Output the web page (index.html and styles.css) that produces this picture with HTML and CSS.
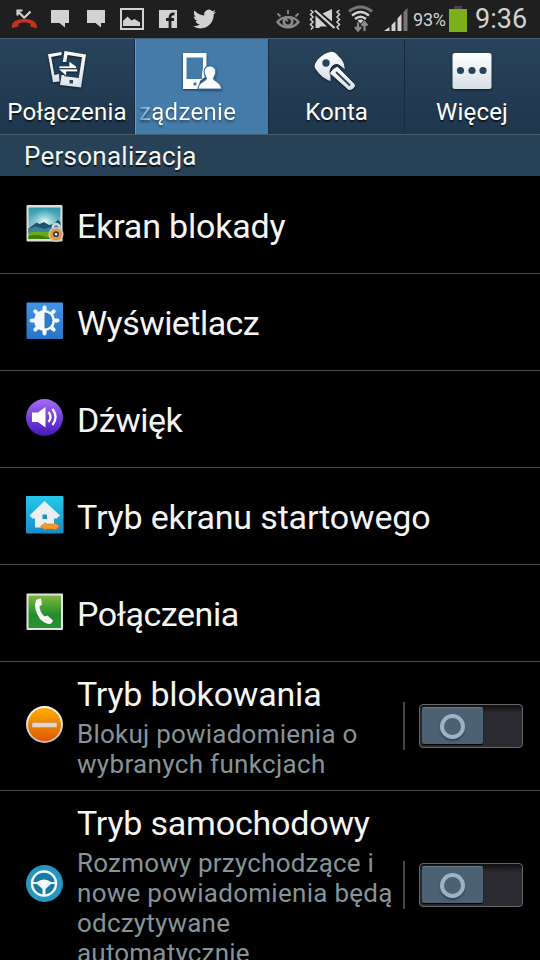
FILE: index.html
```html
<!DOCTYPE html>
<html lang="pl">
<head>
<meta charset="utf-8">
<title>Ustawienia</title>
<link rel="stylesheet" href="styles.css">
</head>
<body>
<svg class="defs" width="0" height="0">
  <defs>
    <linearGradient id="silver" x2="0" y2="1"><stop stop-color="#fff"/><stop offset="1" stop-color="#d5dfe6"/></linearGradient>
    <linearGradient id="sky" x2="0" y2="1"><stop stop-color="#2d98aa"/><stop offset="1" stop-color="#b9e3e2"/></linearGradient>
    <radialGradient id="sun" cx=".5" cy=".48" r=".45"><stop stop-color="#f4fffb"/><stop offset="1" stop-color="#9fdde0" stop-opacity="0"/></radialGradient>
    <linearGradient id="blue" x2="0" y2="1"><stop stop-color="#4295e6"/><stop offset="1" stop-color="#2774cb"/></linearGradient>
    <linearGradient id="violet" x2="0" y2="1"><stop stop-color="#a56cf2"/><stop offset=".5" stop-color="#7440dc"/><stop offset="1" stop-color="#4519b4"/></linearGradient>
    <linearGradient id="cyan" x2="0" y2="1"><stop stop-color="#24c8ea"/><stop offset="1" stop-color="#178ccb"/></linearGradient>
    <linearGradient id="green" x2="0" y2="1"><stop stop-color="#7db93d"/><stop offset=".6" stop-color="#238c2b"/><stop offset="1" stop-color="#2c9136"/></linearGradient>
    <linearGradient id="orange" x2="0" y2="1"><stop stop-color="#ffae00"/><stop offset="1" stop-color="#dc5800"/></linearGradient>
    <linearGradient id="rim" x2="0" y2="1"><stop stop-color="#fff"/><stop offset="1" stop-color="#c0b5b0"/></linearGradient>
  </defs>
</svg>
<div class="screen">
  <header class="status">
    <svg class="status-left" width="270" height="38" viewBox="0 0 270 38">
      <path d="M24.500 18l-6-6M17.500 15.500v-5h5M24 18l6.500-6.500" fill="none" stroke="#d2d2d2" stroke-width="2.200"/>
      <path d="M12 28C10.500 22 17 19 24.500 19S38 22 36.800 28.500L30.500 26.500V23.500C27 22 21.500 22 18.500 23.500V26.500Z" fill="#c3331f"/>
      <path d="M51 10h18v13h-4v4.500l-5.500-4.500H51ZM87 10h18v13h-4v4.500l-5.500-4.500H87Z" fill="#d2d2d2"/>
      <path d="M121 9h22v20h-22Z" fill="none" stroke="#d2d2d2" stroke-width="2"/>
      <path d="M123 26v-5l4.500-4.500 4 4 3-1.500 5.500 3.500V26Z" fill="#d2d2d2"/>
      <path d="M159 10h18v18h-18Z" fill="#d2d2d2"/>
      <path d="M170 28v-10.500q0-4 4.500-3.500M166 19.500h8" fill="none" stroke="#1f1f1f" stroke-width="2.800"/>
      <path transform="translate(193 7.500) scale(.96)" fill="#d2d2d2" d="M23.953 4.570a10 10 0 01-2.825.775 4.958 4.958 0 002.163-2.723c-.951.555-2.005.959-3.127 1.184a4.920 4.920 0 00-8.384 4.482C7.690 8.095 4.067 6.130 1.640 3.162a4.822 4.822 0 00-.666 2.475c0 1.710.870 3.213 2.188 4.096a4.904 4.904 0 01-2.228-.616v.060a4.923 4.923 0 003.946 4.827 4.996 4.996 0 01-2.212.085 4.936 4.936 0 004.604 3.417 9.867 9.867 0 01-6.102 2.105c-.390 0-.779-.023-1.170-.067a13.995 13.995 0 007.557 2.209c9.053 0 13.998-7.496 13.998-13.985 0-.210 0-.420-.015-.630A9.935 9.935 0 0024 4.590z"/>
    </svg>
    <svg class="status-right" width="139" height="38" viewBox="270 0 139 38">
      <g fill="none" stroke="#8a8a8a" stroke-width="1.800">
        <path d="M277.500 22c5-6.500 16-6.500 21 0-5 7-16 7-21 0Z" stroke-width="2.400"/>
        <path d="M277.500 13.500l3 3M288 10v4M298.500 13.500l-3 3"/>
        <circle cx="288" cy="21.500" r="4.200" stroke-width="2.600"/>
      </g>
      <path d="M285 19l3 2" stroke="#8a8a8a" stroke-width="2"/>
      <g fill="none" stroke="#d2d2d2" stroke-width="1.500">
        <path d="M310.500 10l2.500 2-2.500 2.500 2.500 2.500-2.500 2.500 2.500 2.500-2.500 2.500 2.500 2.500-2 2.500M339.500 10l-2.500 2 2.500 2.500-2.500 2.500 2.500 2.500-2.500 2.500 2.500 2.500-2.500 2.500 2 2.500"/>
        <path d="M315 10.500l19.500 17.500" stroke-width="2.200"/>
      </g>
      <path d="M315.500 15.500l11.500 11h-6.500l-1.500 1.500h-3.500ZM322.500 13.500l9.500-4.500v12.500Z" fill="#d2d2d2"/>
      <g fill="none" stroke-width="3">
        <path d="M349 11.500q11.500-9 23 0" stroke="#777"/>
        <path d="M352 15.500q8.500-7 17 0M355 19q5.500-4.500 11 0" stroke="#d2d2d2" stroke-width="2.400"/>
      </g>
      <path d="M357.500 20.500q3-2 6 0l-3 3Z" fill="#d2d2d2"/>
      <path d="M358 22.500v6M364.500 31v-7M355 27l3 3.500 3-3.500M361.500 25.500l3-3.500 3 3.500" fill="none" stroke="#8a8a8a" stroke-width="2.200"/>
      <path d="M384 31l5.500-4v4ZM391.500 25l4-4v10h-4ZM397.500 18.500l4-4.500v17h-4Z" fill="#d2d2d2"/>
      <path d="M403.500 12l4-4v23h-4Z" fill="#777"/>
    </svg>
    <span class="percent">93%</span>
    <span class="battery"></span>
    <span class="clock">9:36</span>
  </header>

  <nav class="tabs">
    <div class="tab">
      <svg class="tab-icon calls-icon" width="44" height="44" viewBox="0 0 44 44">
        <path d="M4 6.200L17.500 4v3L7.200 9l3.200 18 4.600-1 .5 7.500-6.500.7Z" fill="url(#silver)"/>
        <path d="M20.500 3L42 6.500 37 39.500 16 37 17.500 27h3l-.5 2.500 14.500 2L38 9.300 23.500 7l-1.200 7h-3.500Z" fill="url(#silver)"/>
        <path d="M18.500 28l16.500 2-1.200 6.500-16-1.500Z" fill="#e4ebef"/>
        <path d="M15.500 18.500h10v-4.500l6.500 4.700v1.300H15.500ZM33 21.500v1.800H22v4l-6.500-5.800Z" fill="#fff" stroke="#fff" stroke-width=".3"/>
        <path d="M25.500 32h3.500v3.500h-3.500Z" fill="#29435a"/>
      </svg>
      <span class="tab-label label-calls">Połączenia</span>
    </div>
    <div class="tab active">
      <svg class="tab-icon device-icon" width="44" height="44" viewBox="0 0 44 44">
        <path d="M5 5h23.500v13q-3 2-2.500 7l1 4-5 4-2 8H5Z" fill="#fff"/>
        <path d="M8.500 9.500h16.500v11l-1 5v5.500H8.500Z" fill="#447ba8"/>
        <path d="M15.500 34.500h3v3h-3Z" fill="#447ba8"/>
        <path d="M32 18c5 0 6.500 4 5.500 8l-2 4.500c0 3 8 3 8 10.500H20c0-7.500 8.500-7.500 8.500-10.500L26.500 26c-1-4 .5-8 5.500-8Z" fill="#fff" stroke="#447ba8" stroke-width="1.200"/>
      </svg>
      <span class="tab-label label-device">ządzenie</span>
    </div>
    <div class="tab">
      <svg class="tab-icon key-icon" width="44" height="44" viewBox="0 0 44 44">
        <path d="M19 3.700q2.500-.4 5 1.800l6 6.500q2.800 4 2.800 9.200l-5.300-4.200c-3-2-6.500-.5-8.500 2.500-1.500 2.500-2.200 5-.5 8v5.500C12 31 7.500 26.500 4 21.500c-1.500-2-1.700-3-1-5.500C6 9.500 12.500 5 19 3.700Z" fill="url(#silver)"/>
        <circle cx="14" cy="15" r="3.700" fill="#28445c"/>
        <path d="M25.500 19.300l16.800 17.200q.5 1.500-.6 3-1.500 2.200-5 2L18.500 25.300q2-4.500 7-6Z" fill="url(#silver)" stroke="url(#silver)" stroke-linejoin="round"/>
        <path d="M24 24l14 13.500" stroke="#28445c" stroke-width="1.800"/>
      </svg>
      <span class="tab-label label-accounts">Konta</span>
    </div>
    <div class="tab">
      <svg class="tab-icon more-icon" width="44" height="44" viewBox="0 0 44 44">
        <rect x="2.500" y="5" width="39" height="36" rx="2.500" fill="url(#silver)"/>
        <g fill="#29435a"><circle cx="10.500" cy="22.500" r="3.600"/><circle cx="22" cy="22.500" r="3.600"/><circle cx="33" cy="22.500" r="3.600"/></g>
      </svg>
      <span class="tab-label label-more">Więcej</span>
    </div>
  </nav>

  <h2 class="section"><span>Personalizacja</span></h2>

  <main class="list">
    <div class="row">
      <svg class="icon" width="38" height="38" viewBox="0 0 38 38">
        <rect x=".5" y="0" width="36" height="36.500" rx="1" fill="#dededb"/>
        <path d="M2.500 2.500h32v31.500h-32Z" fill="url(#sky)"/><path d="M2.500 2.500h32v31.500h-32Z" fill="url(#sun)"/>
        <path d="M2.500 23.500l8-6 3 1.500 4.500-2 5 3 5-1 4-4.500 2.500 3v10h-32Z" fill="#22516f"/>
        <path d="M2.500 24l7-2.500 9 2.500 8-2.500 8-1v8h-32Z" fill="#3d829b"/>
        <path d="M2.500 27.500q14-2 32 1.500v5h-32Z" fill="#69aa19"/><path d="M2.500 31q10-3 23 3h-23Z" fill="#417f08"/>
        <path d="M27 25v-4q3-4 6.500 0v4" fill="none" stroke="#d3d9dd" stroke-width="2.300"/>
        <circle cx="30" cy="29.500" r="7.500" fill="#cfc5bb"/><circle cx="30" cy="29.500" r="4.700" fill="none" stroke="#e3963a" stroke-width="2.800"/><circle cx="30" cy="29.200" r="3" fill="#303338"/><circle cx="30" cy="29.200" r="1.300" fill="#fff"/>
      </svg>
      <span class="title t1">Ekran blokady</span>
    </div>
    <div class="row">
      <svg class="icon" width="38" height="38" viewBox="0 0 38 38">
        <rect x=".5" y=".5" width="36.500" height="36.500" rx="1" fill="url(#blue)"/>
        <g stroke="#f5f7f8" stroke-width="4" stroke-linecap="round"><path d="M18.500 5.500v26M5.500 18.500h5M26.500 18.500h5M9.300 9.300l4 4M23.700 23.700l4 4M9.300 27.700l4-4M23.700 13.300l4-4"/></g>
        <circle cx="18.500" cy="18.500" r="10.500" fill="#f5f7f8"/>
        <path d="M18.500 10.500a8 8 0 010 16Z" fill="#2d78c9"/>
      </svg>
      <span class="title t2">Wyświetlacz</span>
    </div>
    <div class="row">
      <svg class="icon" width="38" height="38" viewBox="0 0 38 38">
        <circle cx="18.500" cy="18.500" r="18.500" fill="url(#violet)"/>
        <path d="M6 13.500h6l7.500-5.500v20.500L12 23H6Z" fill="#fff"/>
        <path d="M22.500 13q4 5 0 10M26.500 10q6 8 0 16" fill="none" stroke="#fff" stroke-width="2.300"/>
      </svg>
      <span class="title t3">Dźwięk</span>
    </div>
    <div class="row">
      <svg class="icon" width="38" height="38" viewBox="0 0 38 38">
        <rect width="37.500" height="37.500" rx="1" fill="url(#cyan)"/>
        <path d="M18.500 5L34 19.500l-3.500 3H28V31.500H9V22.500H6.500L3.500 19.500Z" fill="#ecedef"/>
        <path d="M16.500 18.500h4.500v4.500h-4.500Z" fill="#1c93bd"/>
        <path d="M14.500 30.500l5-4v1.500h9v-1.500l5.500 4-5.500 4V33h-9v1.500Z" fill="#f29a2c" stroke="#b66d1c" stroke-width=".5"/>
      </svg>
      <span class="title t4">Tryb ekranu startowego</span>
    </div>
    <div class="row">
      <svg class="icon" width="38" height="38" viewBox="0 0 38 38">
        <rect x=".5" y=".5" width="36.500" height="36.500" rx="1" fill="#e2e5e2"/>
        <path d="M2.500 2.500H35V35H2.500Z" fill="url(#green)"/>
        <path d="M10 7q3-2 5-1.500l1 6-2.500 2q.5 6 5 10l3-1 5.500 5q-.5 2.500-3 3.500-5 0-10-5-7-10-4-19Z" fill="#f7f8f7"/>
      </svg>
      <span class="title t5">Połączenia</span>
    </div>
    <div class="row detailed">
      <svg class="icon" width="38" height="38" viewBox="0 0 38 38">
        <circle cx="18.500" cy="18.500" r="18.500" fill="url(#rim)"/><circle cx="18.500" cy="18.500" r="16.500" fill="url(#orange)"/>
        <rect x="6" y="16.500" width="25" height="5" fill="#e2d5c7" stroke="#c38544" stroke-width=".5"/>
      </svg>
      <div class="text">
        <span class="title t6">Tryb blokowania</span>
        <p class="summary"><span class="s1">Blokuj powiadomienia o</span><br><span class="s2">wybranych funkcjach</span></p>
      </div>
      <div class="toggle-area"><div class="toggle"><div class="thumb"><i class="ring"></i></div></div></div>
    </div>
    <div class="row detailed last">
      <svg class="icon" width="38" height="38" viewBox="0 0 38 38">
        <circle cx="18.500" cy="18.500" r="18.500" fill="#2797bf"/>
        <circle cx="18" cy="18.500" r="12" fill="#177aa2" stroke="#f7fafb" stroke-width="2.400"/>
        <path d="M6.500 17H11q3-2.500 7-2.500t7 2.500h4.500v2H25L19.500 24v6h-3v-6L11 19H6.500Z" fill="#f7fafb"/>
      </svg>
      <div class="text">
        <span class="title t7">Tryb samochodowy</span>
        <p class="summary"><span class="s3">Rozmowy przychodzące i</span><br><span class="s4">nowe powiadomienia będą</span><br><span class="s5">odczytywane</span><br><span class="s6">automatycznie</span></p>
      </div>
      <div class="toggle-area"><div class="toggle"><div class="thumb"><i class="ring"></i></div></div></div>
    </div>
  </main>
</div>
</body>
</html>
```
FILE: styles.css
```css
* { box-sizing: border-box; }
body { margin: 0; background: #000; font-family: Roboto, sans-serif; color: #f5f5f5; }
.defs { display: block; }
.screen { width: 540px; height: 960px; overflow: hidden; display: flex; flex-direction: column; }
svg { display: block; flex: none; }

.status { height: 38px; flex: none; display: flex; background: #1f1f1f; color: #d2d2d2; white-space: nowrap; }
.percent { width: 40px; margin-left: 4px; font-size: 18px; line-height: 40px; letter-spacing: -.2px; }
.battery { width: 18px; height: 23px; margin: 9px 0 0 -4px; background: #7dae1b; position: relative; }
.battery::before { content: ""; position: absolute; left: 5px; top: -3px; width: 8px; height: 3px; background: #454545; }
.clock { margin-left: 8px; font-size: 27px; line-height: 38px; }

.tabs { height: 97px; flex: none; display: grid; grid-template-columns: 135px 134px 136px 135px; border-top: 1px solid #466072; border-bottom: 1px solid #466072; background: linear-gradient(#28435a, #1f364d); }
.tab { display: flex; flex-direction: column; align-items: center; border-right: 1px solid #162b40; padding-top: 9px; overflow: hidden; }
.tab:last-child { border-right: 0; }
.tab.active { background: #447ba8; border-left: 1px solid #6b98bd; }
.tab-icon { filter: drop-shadow(0 1px 1px #0009); }
.calls-icon { margin-right: 3px; }
.device-icon { margin-right: 4px; }
.key-icon { margin-right: 5px; }
.more-icon { margin-right: 2px; }
.tab-label { font-size: 24px; line-height: 28px; margin-top: 6px; color: #fff; text-shadow: 0 2px 1px #0009; white-space: nowrap; }
.label-calls { letter-spacing: .2px; }
.label-more { letter-spacing: .2px; margin-right: 1px; }
.label-device { align-self: flex-start; margin-left: 3px; letter-spacing: .3px; background: linear-gradient(90deg, #6b98bd 0, #a5c2d8 10px, #fff 15px); -webkit-background-clip: text; background-clip: text; color: transparent; text-shadow: none; filter: drop-shadow(0 2px 1px #0006); }

.section { height: 41px; flex: none; margin: 0; padding-left: 24px; background: #274157; font-size: 26px; letter-spacing: .25px; font-weight: 400; line-height: 42px; text-shadow: 0 2px 1px #000a; }

.list { flex: none; padding-top: 1px; }
.row { height: 97px; border-bottom: 1px solid #4a4a4a; display: flex; padding-left: 26px; }
.icon { margin: 28px 13px 0 0; }
.title { display: block; font-size: 34px; line-height: 40px; margin-top: 29px; white-space: nowrap; }
.t1 { letter-spacing: -.18px; }
.t2 { letter-spacing: -.55px; }
.t3 { letter-spacing: -.5px; }
.t4 { letter-spacing: -.15px; }
.t5 { letter-spacing: -.45px; }
.t6, .t7 { letter-spacing: -.2px; }
.detailed { height: 129px; }
.detailed .icon { margin-top: 44px; }
.detailed .title { margin-top: 12px; }
.text { width: 326px; flex: none; }
.summary { margin: 5px 0 0; font-size: 26px; line-height: 30px; color: #86949a; white-space: nowrap; }
.s1 { letter-spacing: .23px; }
.s2 { letter-spacing: .33px; }
.s4 { letter-spacing: .28px; }
.s3, .s5 { letter-spacing: .2px; }
.s6 { letter-spacing: .2px; }
.toggle-area { height: 48px; margin-top: 40px; border-left: 2px solid #454545; padding: 2px 0 0 14px; }
.toggle { width: 104px; height: 44px; border: 1px solid #686868; border-radius: 4px; padding: 2px; background: linear-gradient(#101012, #2a2a30 8px); }
.thumb { width: 61px; height: 37px; border-radius: 2px; background: #4c6273; border-top: 1px solid #687a88; box-shadow: 0 1px 1px #000; display: grid; place-items: center; }
.ring { width: 25px; height: 25px; border: 4px solid #9bb3c9; border-radius: 50%; box-shadow: 0 2px 2px #0005; }
.last { height: 220px; border-bottom: 0; }
.last .icon { margin-top: 74px; }
.last .toggle-area { margin-top: 70px; }
```
